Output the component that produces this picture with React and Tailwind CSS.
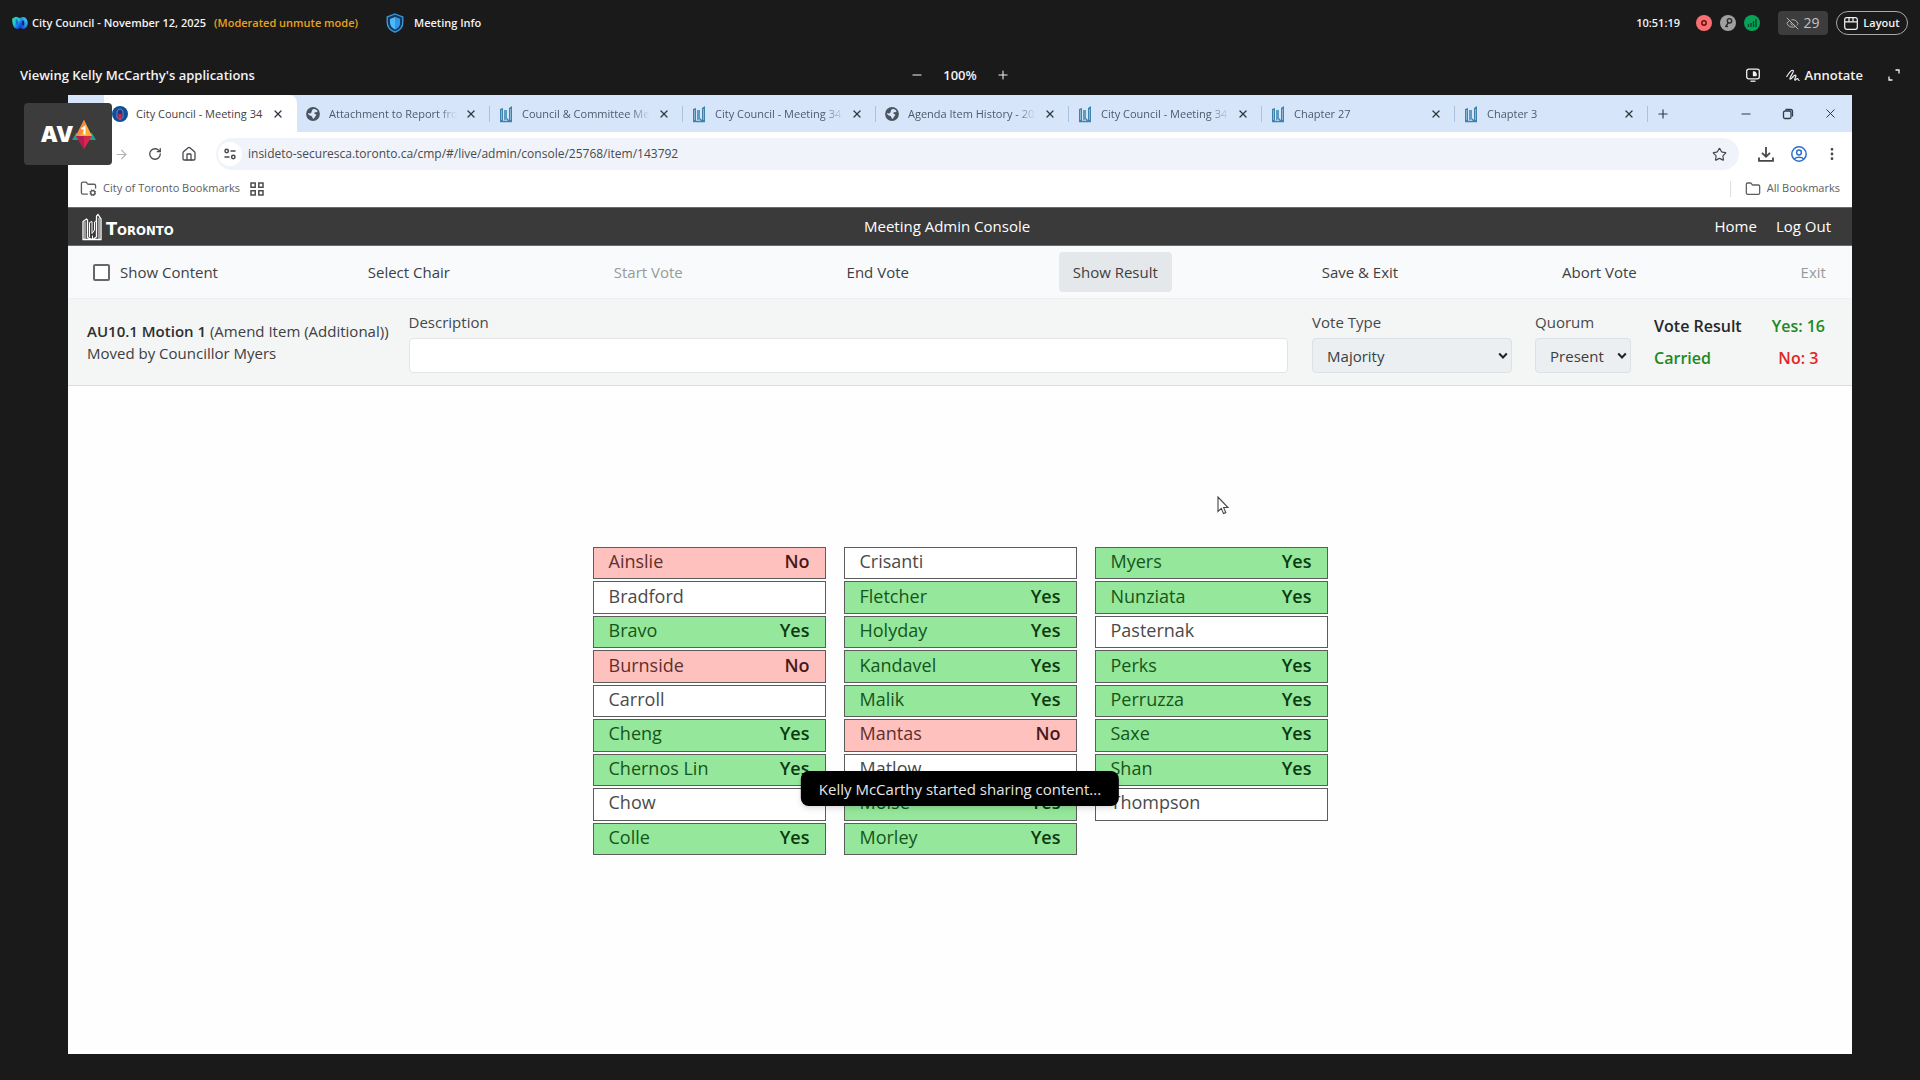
import React from "react";
import {
  Minus,
  Plus,
  X,
  Star,
  EllipsisVertical,
  House,
  RotateCw,
  ArrowRight,
  EyeOff,
  Folder,
  FolderCog,
} from "lucide-react";

const TABS = [
  { title: "City Council - Meeting 34", icon: "council", active: true },
  { title: "Attachment to Report from", icon: "globe" },
  { title: "Council & Committee Meetings", icon: "city" },
  { title: "City Council - Meeting 34", icon: "city" },
  { title: "Agenda Item History - 2025", icon: "globe" },
  { title: "City Council - Meeting 34", icon: "city" },
  { title: "Chapter 27", icon: "city" },
  { title: "Chapter 3", icon: "city" },
];

const MEMBERS = [
  ["Ainslie", "No"],
  ["Bradford", ""],
  ["Bravo", "Yes"],
  ["Burnside", "No"],
  ["Carroll", ""],
  ["Cheng", "Yes"],
  ["Chernos Lin", "Yes"],
  ["Chow", ""],
  ["Colle", "Yes"],
  ["Crisanti", ""],
  ["Fletcher", "Yes"],
  ["Holyday", "Yes"],
  ["Kandavel", "Yes"],
  ["Malik", "Yes"],
  ["Mantas", "No"],
  ["Matlow", ""],
  ["Moise", "Yes"],
  ["Morley", "Yes"],
  ["Myers", "Yes"],
  ["Nunziata", "Yes"],
  ["Pasternak", ""],
  ["Perks", "Yes"],
  ["Perruzza", "Yes"],
  ["Saxe", "Yes"],
  ["Shan", "Yes"],
  ["Thompson", ""],
];

const VOTE_STYLE = {
  Yes: { row: "bg-[#95e79b]", name: "text-[#14561a]", vote: "text-[#0c3a10]" },
  No: { row: "bg-[#ffc1bd]", name: "text-[#5e2f2d]", vote: "text-[#47191a]" },
  "": { row: "bg-white", name: "text-[#4a4a4a]", vote: "" },
};

function WebexLogo() {
  return (
    <svg className="h-4 w-4" viewBox="0 0 16 16" aria-hidden="true">
      <defs>
        <linearGradient id="wxl" x1="0" y1="0" x2="1" y2="1">
          <stop offset="0" stopColor="#2ee6a8" />
          <stop offset="0.5" stopColor="#1aa0f0" />
          <stop offset="1" stopColor="#1440e0" />
        </linearGradient>
        <linearGradient id="wxr" x1="1" y1="0" x2="0" y2="1">
          <stop offset="0" stopColor="#39c8f5" />
          <stop offset="1" stopColor="#1238d8" />
        </linearGradient>
      </defs>
      <ellipse cx="11" cy="8" rx="3" ry="4.400" fill="#0c2a78" stroke="url(#wxr)" strokeWidth="3.400" />
      <path d="M1.900 4.500C2 8.600 3 12.300 5.400 12.300C8 12.300 8.200 8 7.400 4.600" fill="#1670d8" stroke="url(#wxl)" strokeWidth="3.400" strokeLinecap="round" />
      <path d="M2.200 4.200C3.400 2.600 6 2.800 7.200 5.200" fill="none" stroke="#25c9c0" strokeWidth="2.600" strokeLinecap="round" />
    </svg>
  );
}

function ShieldLogo() {
  return (
    <svg className="h-5 w-[18px]" viewBox="0 0 18 20" aria-hidden="true">
      <path d="M9 1L16.800 4V9.500C16.800 14 13.600 17.400 9 19.200C4.400 17.400 1.200 14 1.200 9.500V4Z" fill="#12395e" stroke="#3d9be0" strokeWidth="1.300" />
      <path d="M9 4L14 6V9.800C14 12.800 12 15 9 16.400C6 15 4 12.800 4 9.800V6Z" fill="#4fb8fb" />
      <path d="M9 4L14 6V9.800C14 12.800 12 15 9 16.400Z" fill="#2f97e6" />
    </svg>
  );
}

function CityIcon() {
  return (
    <svg className="h-[18px] w-[14px] shrink-0" viewBox="0 0 14 18" aria-hidden="true">
      <path d="M1 4L4 3V16H1ZM10 3L13 1V16H10Z" fill="#3f82ab" />
      <path d="M5 5H8V14L5 15.500Z" fill="#5d9bc0" />
      <path d="M1 16.500H13M7.500 13.500L10 16" fill="none" stroke="#3f82ab" strokeWidth="1.300" />
      <path d="M2.500 5V15M11.500 4V15" stroke="#a9cbe4" strokeWidth="0.700" />
    </svg>
  );
}

function GlobeIcon() {
  return (
    <svg className="h-[14px] w-[14px] shrink-0" viewBox="0 0 14 14" aria-hidden="true">
      <circle cx="7" cy="7" r="6.900" fill="#4a5560" />
      <path d="M7 2.200C9 1.600 10.800 2.800 11.600 4.200C10.400 5.600 9.400 4.800 8.600 5.600C7.800 6.400 8.600 7 9.800 7.200C10.600 7.400 10.400 8.400 9.600 9C8.600 9.800 8.600 11 7.600 11.800C6.600 12 6.400 10.600 6.200 9.800C5.800 8.800 4 8.800 3 8C2.200 7.300 1.900 6.600 1.900 6C3.200 6.800 4.800 6.600 5.400 5.600C6 4.600 5.400 3 7 2.200Z" fill="#d9e5f9" />
    </svg>
  );
}

function CouncilIcon() {
  return (
    <svg className="h-4 w-4 shrink-0" viewBox="0 0 16 16" aria-hidden="true">
      <circle cx="8" cy="8" r="8" fill="#0f4f96" />
      <path d="M5 11.500V6.500C5 4.500 6.400 3 8 3C9.600 3 11 4.500 11 6.500V11.500L8 13.500Z" fill="#27357c" stroke="#7c9fd0" strokeWidth="0.800" />
      <path d="M6.500 8H9.500V13H6.500Z" fill="#d42450" />
    </svg>
  );
}

const TAB_ICONS = { council: CouncilIcon, globe: GlobeIcon, city: CityIcon };

function Tab({ title, icon, active }) {
  const Icon = TAB_ICONS[icon];
  const label = (
    <>
      <span className="flex w-4 shrink-0 justify-center">
        <Icon />
      </span>
      <button
        type="button"
        role="tab"
        aria-selected={!!active}
        className={
          active
            ? "min-w-0 flex-1 text-left whitespace-nowrap text-[#3f4144]"
            : "min-w-0 flex-1 overflow-hidden mask-r-from-85% text-left whitespace-nowrap text-[#4d5a6b]"
        }
      >
        {title}
      </button>
      <button type="button" aria-label={"Close " + title} className="shrink-0 text-[#2f3740]">
        <X size={12} strokeWidth={2.600} />
      </button>
    </>
  );
  return active ? (
    <div className="flex w-[193px] items-center gap-2 rounded-tr-lg bg-white pt-px pr-[13px] pl-2">{label}</div>
  ) : (
    <div className="flex w-[193px] items-center pt-px">
      <div className="flex min-w-0 flex-1 items-center gap-2 pr-[12px] pl-2">{label}</div>
      <span className="h-4 w-px bg-[#a9c2e2]" />
    </div>
  );
}

function ShareHeader() {
  return (
    <header className="text-[#f2f2f2]">
      <div className="flex h-[46px] items-center justify-between px-3 text-[11px] leading-4 font-semibold">
        <div className="flex items-center">
          <WebexLogo />
          <h1 className="ml-1">City Council - November 12, 2025</h1>
          <span className="ml-2 text-[#e8a21c]">(Moderated unmute mode)</span>
          <button type="button" className="ml-7 flex items-center gap-[10px]">
            <ShieldLogo />
            Meeting Info
          </button>
        </div>
        <div className="flex items-center">
          <time className="mr-4">10:51:19</time>
          <div className="flex items-center gap-2">
            <svg className="h-4 w-4" viewBox="0 0 16 16" role="img" aria-label="Recording">
              <circle cx="8" cy="8" r="8" fill="#fb6f71" />
              <circle cx="8" cy="8" r="2.200" fill="none" stroke="#611214" strokeWidth="1.500" />
            </svg>
            <svg className="h-4 w-4" viewBox="0 0 16 16" role="img" aria-label="Encrypted">
              <circle cx="8" cy="8" r="8" fill="#a0a0a0" />
              <circle cx="9.500" cy="5.800" r="2.200" fill="none" stroke="#2a2a2a" strokeWidth="1.400" />
              <path d="M8.400 7.700L5.500 12M6.300 10.800L7.800 11.800" fill="none" stroke="#2a2a2a" strokeWidth="1.400" />
            </svg>
            <svg className="h-4 w-4" viewBox="0 0 16 16" role="img" aria-label="Connection">
              <circle cx="8" cy="8" r="8" fill="#06a458" />
              <path d="M4.500 9V12M7 8V12M9.500 6V12M12 4V12" stroke="#064a2a" strokeWidth="1.400" />
            </svg>
          </div>
          <button type="button" className="ml-[18px] flex h-6 w-[50px] items-center justify-center gap-1 rounded bg-[#3d3d3d] text-sm font-normal text-[#c4c4c4]">
            <EyeOff size={13} strokeWidth={1.600} />
            29
          </button>
          <button type="button" className="ml-2 flex h-6 w-[72px] items-center justify-center gap-[5px] rounded-full border border-[#a8a8a8]">
            <svg className="h-[13px] w-[14px]" viewBox="0 0 14 13" fill="none" stroke="currentColor" strokeWidth="1.200" aria-hidden="true">
              <rect x="0.700" y="0.700" width="12.600" height="11.600" rx="2" />
              <path d="M0.700 4.800H13.300M5 0.700V4.800M9 0.700V4.800" />
            </svg>
            Layout
          </button>
        </div>
      </div>
      <div className="grid h-[49px] grid-cols-3 items-center px-4 pt-2 text-[13px] leading-5 font-semibold">
        <h2 className="pl-1">Viewing Kelly McCarthy's applications</h2>
        <div className="flex items-center justify-center gap-[19px]">
          <button type="button" aria-label="Zoom out"><Minus size={14} strokeWidth={1.800} /></button>
          <output>100%</output>
          <button type="button" aria-label="Zoom in"><Plus size={14} strokeWidth={1.800} /></button>
        </div>
        <div className="flex items-center justify-end">
          <button type="button" aria-label="Screen view" className="mr-[26px]">
            <svg className="h-[14px] w-[14px]" viewBox="0 0 14 14" fill="none" stroke="currentColor" strokeWidth="1.300" aria-hidden="true">
              <rect x="0.700" y="1.200" width="12.600" height="9.600" rx="2" />
              <path d="M4.500 13.200H9.500" />
              <path d="M7.500 4V7.500H10A2.500 2.500 0 0 0 7.500 4Z" fill="currentColor" />
            </svg>
          </button>
          <button type="button" className="flex items-center gap-[5px]">
            <svg className="h-[14px] w-[14px]" viewBox="0 0 14 14" fill="none" stroke="currentColor" strokeWidth="1.200" strokeLinecap="round" aria-hidden="true">
              <path d="M0.800 8.500C3.500 4 6 1.500 7.200 2.500C8.600 4 2.800 9.800 4 11C5.200 12 8 6.300 9.600 7.200C11 8.200 7.800 11 8.900 12C9.800 12.700 10.500 10.200 11.600 10.500C12.400 10.800 12 12.500 13.200 12.500" />
            </svg>
            Annotate
          </button>
          <button type="button" aria-label="Full screen" className="ml-[21px] p-1">
            <svg className="h-3 w-3" viewBox="0 0 12 12" fill="none" stroke="currentColor" strokeWidth="1.300" aria-hidden="true">
              <path d="M7.500 1H11V4.500M1 7.500V11H4.500" />
            </svg>
          </button>
        </div>
      </div>
    </header>
  );
}

function BrowserChrome() {
  return (
    <div className="text-[#4a4d51]">
      <div className="flex h-[37px] items-stretch justify-between bg-[#d7e5fb] pl-9 text-[11px]">
        <div role="tablist" className="flex min-w-0 items-stretch">
          {TABS.map((tab, i) => (
            <Tab key={i} {...tab} />
          ))}
          <button type="button" aria-label="New tab" className="px-2 text-[#333b45]">
            <Plus size={14} strokeWidth={2} />
          </button>
        </div>
        <div className="flex items-center gap-7 pr-[14px] text-[#333b45]">
          <button type="button" aria-label="Minimize"><Minus size={14} strokeWidth={1.800} /></button>
          <button type="button" aria-label="Restore">
            <svg className="h-[14px] w-[14px]" viewBox="0 0 14 14" fill="none" stroke="currentColor" strokeWidth="1.300" aria-hidden="true">
              <rect x="2.500" y="4" width="7.500" height="7.500" rx="1.500" />
              <path d="M4.500 2.500H9.500C11 2.500 11.500 3 11.500 4.500V9.500" />
            </svg>
          </button>
          <button type="button" aria-label="Close window"><X size={15} strokeWidth={1.600} /></button>
        </div>
      </div>
      <div className="flex h-11 items-center gap-[19px] pr-3 pl-[46px] text-[#44474b]">
        <button type="button" aria-label="Forward" className="text-[#b3b3b3]"><ArrowRight size={15} strokeWidth={1.800} /></button>
        <button type="button" aria-label="Reload"><RotateCw size={14} strokeWidth={2.200} /></button>
        <button type="button" aria-label="Home page"><House size={16} strokeWidth={1.900} /></button>
        <div className="flex h-8 flex-1 items-center gap-[6px] rounded-full bg-[#f0f4fa] pr-3 pl-0.5">
          <span className="flex h-6 w-6 items-center justify-center rounded-full bg-white">
            <svg className="h-3 w-3" viewBox="0 0 12 12" fill="none" stroke="currentColor" strokeWidth="1.500" aria-hidden="true">
              <circle cx="2.700" cy="3" r="1.700" />
              <path d="M6.500 3H11.500M0.500 9H5.500" />
              <circle cx="9.300" cy="9" r="1.700" />
            </svg>
          </span>
          <input
            aria-label="Address"
            className="min-w-0 flex-1 bg-transparent text-[12px] text-[#474a4e] outline-none"
            defaultValue="insideto-securesca.toronto.ca/cmp/#/live/admin/console/25768/item/143792"
          />
          <button type="button" aria-label="Bookmark this page"><Star size={15} strokeWidth={1.900} /></button>
        </div>
        <div className="flex items-center gap-[17px]">
          <button type="button" aria-label="Downloads">
            <svg className="h-4 w-4" viewBox="0 0 16 16" fill="none" stroke="currentColor" strokeWidth="1.800" aria-hidden="true">
              <path d="M8 1V10.500M4 6.800L8 10.800L12 6.800M1 11.500V14.800H15V11.500" />
            </svg>
          </button>
          <button type="button" aria-label="Profile" className="text-[#2f6fca]">
            <svg className="h-4 w-4" viewBox="0 0 16 16" fill="none" stroke="currentColor" strokeWidth="1.500" aria-hidden="true">
              <circle cx="8" cy="8" r="7.200" />
              <circle cx="8" cy="6.500" r="2.400" />
              <path d="M3.200 13C5.500 10.800 10.500 10.800 12.800 13" />
            </svg>
          </button>
          <button type="button" aria-label="Browser menu"><EllipsisVertical size={16} strokeWidth={2.200} /></button>
        </div>
      </div>
      <div className="flex h-[31px] items-center justify-between pr-3 pb-1.5 pl-3 text-[11px] text-[#5c5e61]">
        <div className="flex items-center">
          <button type="button" className="flex items-center gap-[6px]">
            <FolderCog size={17} strokeWidth={1.900} />
            City of Toronto Bookmarks
          </button>
          <button type="button" aria-label="Apps" className="ml-[10px]">
            <svg className="h-[14px] w-[14px]" viewBox="0 0 14 14" fill="none" stroke="#4a4d51" strokeWidth="1.500" aria-hidden="true">
              <path d="M1 1H5.200V5.200H1ZM8.800 1H13V5.200H8.800ZM1 8.800H5.200V13H1ZM8.800 8.800H13V13H8.800Z" />
            </svg>
          </button>
        </div>
        <div className="flex items-center gap-[14px]">
          <span className="h-4 w-px bg-[#dadfe6]" />
          <button type="button" className="flex items-center gap-[6px]">
            <Folder size={16} strokeWidth={1.900} />
            All Bookmarks
          </button>
        </div>
      </div>
    </div>
  );
}

function TorontoLogo() {
  return (
    <div className="flex items-end gap-1 pr-1.5">
      <svg className="h-7 w-5" viewBox="0 0 20 28" fill="none" stroke="#fff" strokeWidth="1.300" aria-hidden="true">
        <path d="M1 26.500V8.500L4.500 6L5.500 7V24.500L10.500 26.500L14.500 24V3L16 1.500L19 6V26.500Z" />
        <path d="M3 8.500V26M7.500 24V9.500L10 8.500V20.500L12.500 17V9L14.500 7.500M17 5V26M10.500 26V22.500" strokeWidth="1" />
      </svg>
      <span className="font-['DejaVu_Sans_Condensed',sans-serif] text-[13px] leading-5 font-bold text-white">
        <span className="text-[18px]">T</span>ORONTO
      </span>
    </div>
  );
}

function MenuButton({ children, active, disabled }) {
  return (
    <button
      type="button"
      disabled={disabled}
      className={
        active
          ? "h-10 rounded bg-[#e4e8ea] px-[14px] text-[#3d4043]"
          : disabled
            ? "h-10 px-[14px] text-[#979a9d]"
            : "h-10 px-[14px] text-[#3d4043]"
      }
    >
      {children}
    </button>
  );
}

function SelectBox({ id, label, value, width }) {
  return (
    <div className={width}>
      <label htmlFor={id} className="block">{label}</label>
      <div className="relative mt-[5px]">
        <select id={id} defaultValue={value} className="h-[35px] w-full appearance-none rounded-sm border border-[#dde1e4] bg-[#ebeff2] pl-[14px] text-[#3b3e41]">
          <option>{value}</option>
        </select>
        <svg className="pointer-events-none absolute top-[14px] right-1 h-2 w-[10px]" viewBox="0 0 10 8" fill="none" stroke="#222" strokeWidth="2" aria-hidden="true">
          <path d="M1.200 1.500L5 5.500L8.800 1.500" />
        </svg>
      </div>
    </div>
  );
}

function Console() {
  return (
    <main className="flex flex-1 flex-col">
      <div className="flex h-[39px] items-center justify-between border-y border-[#6a6a6a] bg-[#3a3a3a] pr-[21px] pl-[14px] text-[15px] font-medium text-white">
        <TorontoLogo />
        <h2>Meeting Admin Console</h2>
        <nav className="flex gap-[19px]">
          <a href="#home">Home</a>
          <a href="#logout">Log Out</a>
        </nav>
      </div>
      <div className="flex h-[53px] items-center justify-between border-b border-[#eceeef] bg-[#f9fafb] pr-3 pl-[25px] text-[15px]">
        <label className="flex items-center gap-[10px] text-[#3d4043]">
          <input type="checkbox" className="h-[17px] w-[17px] appearance-none rounded-[2px] border-2 border-[#66696c] bg-white" />
          Show Content
        </label>
        <MenuButton>Select Chair</MenuButton>
        <MenuButton disabled>Start Vote</MenuButton>
        <MenuButton>End Vote</MenuButton>
        <MenuButton active>Show Result</MenuButton>
        <MenuButton>Save &amp; Exit</MenuButton>
        <MenuButton>Abort Vote</MenuButton>
        <MenuButton disabled>Exit</MenuButton>
      </div>
      <div className="flex h-[87px] items-center border-b border-[#dcdddf] bg-[#f4f5f5] pr-[27px] pl-[19px] text-[15px] leading-[22px] text-[#45484b]">
        <div className="mr-5 shrink-0 text-[#3d4043]">
          <p><b className="font-semibold text-[#2c2e30]">AU10.1 Motion 1</b> (Amend Item (Additional))</p>
          <p>Moved by Councillor Myers</p>
        </div>
        <div className="mr-6 flex-1">
          <label htmlFor="description" className="block">Description</label>
          <input id="description" className="mt-[5px] block h-[35px] w-full rounded-sm border border-[#e3e4e6] bg-white px-3" />
        </div>
        <SelectBox id="vote-type" label="Vote Type" value="Majority" width="w-[200px] mr-[23px]" />
        <SelectBox id="quorum" label="Quorum" value="Present" width="w-24 mr-[23px]" />
        <div className="grid grid-cols-[auto_auto] gap-x-[30px] gap-y-[10px] text-[16px] font-semibold">
          <span className="text-[#262829]">Vote Result</span>
          <span className="text-center text-[#1a8a24]">Yes: 16</span>
          <span className="text-[#1a8a24]">Carried</span>
          <span className="text-center text-[#e32424]">No: 3</span>
        </div>
      </div>
      <div className="relative flex-1 bg-[#fefefe] pt-[161px]">
        <ul className="mx-auto grid h-[308px] w-[735px] grid-flow-col grid-cols-3 grid-rows-9 gap-x-[18px] gap-y-0.5">
          {MEMBERS.map(([name, vote]) => {
            const s = VOTE_STYLE[vote];
            return (
              <li key={name} className={"flex items-center justify-between border border-[#5c5c5c] px-[15px] pb-1 text-[18px] leading-6 " + s.row}>
                <span className={s.name}>{name}</span>
                <span className={"font-semibold " + s.vote}>{vote}</span>
              </li>
            );
          })}
        </ul>
        <svg className="absolute top-[110px] left-[1149px] h-5 w-3" viewBox="0 0 12 20" aria-hidden="true">
          <path d="M1 1V15.500L4.300 12.400L6.500 17.600L8.800 16.600L6.600 11.500H11Z" fill="#fff" stroke="#444" strokeWidth="1.100" />
        </svg>
      </div>
    </main>
  );
}

function Av1Badge() {
  return (
    <div className="absolute top-[103px] left-6 flex h-[62px] w-[88px] items-center justify-center rounded bg-[#3c3c3c]">
      <span className="font-[Inter,sans-serif] text-[22px] font-black text-white">AV</span>
      <svg className="-ml-0.5 h-[30px] w-6" viewBox="0 0 24 30" role="img" aria-label="1">
        <path d="M0 21L4 14H20L24 21Z" fill="#1fa08a" />
        <path d="M12 1L20 17H4Z" fill="#fbb034" />
        <path d="M12 1L14 8L8 17H4Z" fill="#f58a3c" />
        <path d="M4 17H20L12 30Z" fill="#d8274f" />
        <path d="M4 17H12V30Z" fill="#b51d52" />
        <path d="M9.500 10L12.500 8V15.500" fill="none" stroke="#fff" strokeWidth="2" />
      </svg>
    </div>
  );
}

export default function App() {
  return (
    <div className="relative flex min-h-screen flex-col bg-[#1a1a1a] font-['Open_Sans','Noto_Sans',sans-serif]">
      <ShareHeader />
      <div className="mx-[68px] mb-[26px] flex flex-1 flex-col bg-white">
        <BrowserChrome />
        <Console />
      </div>
      <Av1Badge />
      <div role="status" className="absolute top-[771px] left-1/2 flex h-[35px] -translate-x-1/2 items-center rounded-lg bg-black px-[18px] pt-0.5 text-[15px] whitespace-nowrap text-[#e6e6e6] shadow-md">
        Kelly McCarthy started sharing content...
      </div>
    </div>
  );
}
